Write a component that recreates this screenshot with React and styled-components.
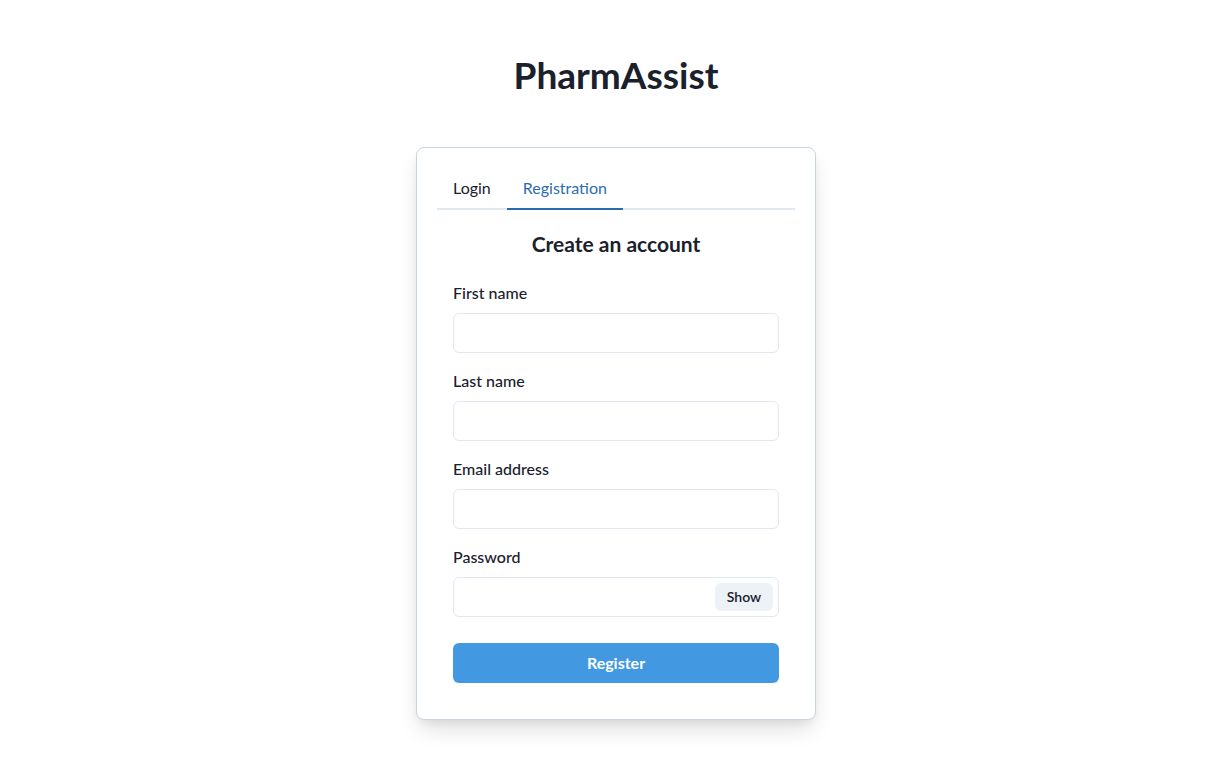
import React, { useState } from 'react'
import styled, { createGlobalStyle } from 'styled-components'

const GlobalStyle = createGlobalStyle`
  * { box-sizing: border-box; }
  body {
    margin: 0;
    background: #ffffff;
    color: #1a202c;
    font-family: "Segoe UI", Lato, "Noto Sans", sans-serif;
  }
`

const Page = styled.div`
  display: flex;
  flex-direction: column;
  align-items: center;
  min-height: 100vh;
  padding: 53px 0 40px;
`

const Brand = styled.h1`
  margin: 0 0 50px;
  font-size: 37px;
  line-height: 44px;
  font-weight: 700;
  color: #1a202c;
`

const Card = styled.div`
  width: 400px;
  padding: 20px;
  background: #fff;
  border: 1px solid #cbd5e0;
  border-radius: 8px;
  box-shadow: 0 12px 22px -4px rgba(0, 0, 0, 0.14), 0 4px 8px -2px rgba(0, 0, 0, 0.06);
`

const TabList = styled.div`
  display: flex;
  border-bottom: 2px solid #e2e8f0;
`

const Tab = styled.button`
  margin-bottom: -2px;
  padding: 8px 16px;
  border: 0;
  border-bottom: 2px solid ${p => (p.$active ? '#2b6cb0' : 'transparent')};
  background: none;
  font-family: inherit;
  font-size: 16px;
  line-height: 24px;
  color: ${p => (p.$active ? '#2b6cb0' : '#1a202c')};
  cursor: pointer;
`

const Panel = styled.div`
  display: flex;
  flex-direction: column;
  padding: 16px;
`

const Heading = styled.h2`
  margin: 6px 0 25px;
  text-align: center;
  font-size: 21px;
  line-height: 24px;
  font-weight: 700;
`

const Field = styled.div`
  display: flex;
  flex-direction: column;
  margin-bottom: 16px;
`

const Label = styled.label`
  margin-bottom: 8px;
  font-size: 16px;
  line-height: 24px;
  font-weight: 500;
`

const InputWrap = styled.div`
  position: relative;
  display: flex;
  align-items: center;
`

const Input = styled.input`
  width: 100%;
  height: 40px;
  padding: 0 ${p => (p.$withButton ? '72px' : '16px')} 0 16px;
  border: 1px solid #e2e8f0;
  border-radius: 6px;
  font-family: inherit;
  font-size: 16px;
  outline: none;
  background: #fff;
`

const ShowButton = styled.button`
  position: absolute;
  right: 6px;
  width: 58px;
  height: 28px;
  padding: 0 0 2px;
  border: 0;
  border-radius: 6px;
  background: #edf2f7;
  color: #1a202c;
  font-family: inherit;
  font-size: 14px;
  font-weight: 600;
  cursor: pointer;
`

const Submit = styled.button`
  margin-top: 10px;
  height: 40px;
  padding: 0 0 2px;
  border: 0;
  border-radius: 6px;
  background: #4299e1;
  color: #fff;
  font-family: inherit;
  font-size: 16px;
  font-weight: 700;
  cursor: pointer;
`

const fields = [
  { id: 'first', label: 'First name', type: 'text' },
  { id: 'last', label: 'Last name', type: 'text' },
  { id: 'email', label: 'Email address', type: 'email' },
]

export default function App() {
  const [show, setShow] = useState(false)
  return (
    <Page>
      <GlobalStyle />
      <Brand>PharmAssist</Brand>
      <Card>
        <TabList>
          <Tab>Login</Tab>
          <Tab $active>Registration</Tab>
        </TabList>
        <Panel>
          <Heading>Create an account</Heading>
          {fields.map(f => (
            <Field key={f.id}>
              <Label htmlFor={f.id}>{f.label}</Label>
              <Input id={f.id} type={f.type} />
            </Field>
          ))}
          <Field>
            <Label htmlFor="password">Password</Label>
            <InputWrap>
              <Input id="password" type={show ? 'text' : 'password'} $withButton />
              <ShowButton onClick={() => setShow(!show)}>{show ? 'Hide' : 'Show'}</ShowButton>
            </InputWrap>
          </Field>
          <Submit>Register</Submit>
        </Panel>
      </Card>
    </Page>
  )
}
